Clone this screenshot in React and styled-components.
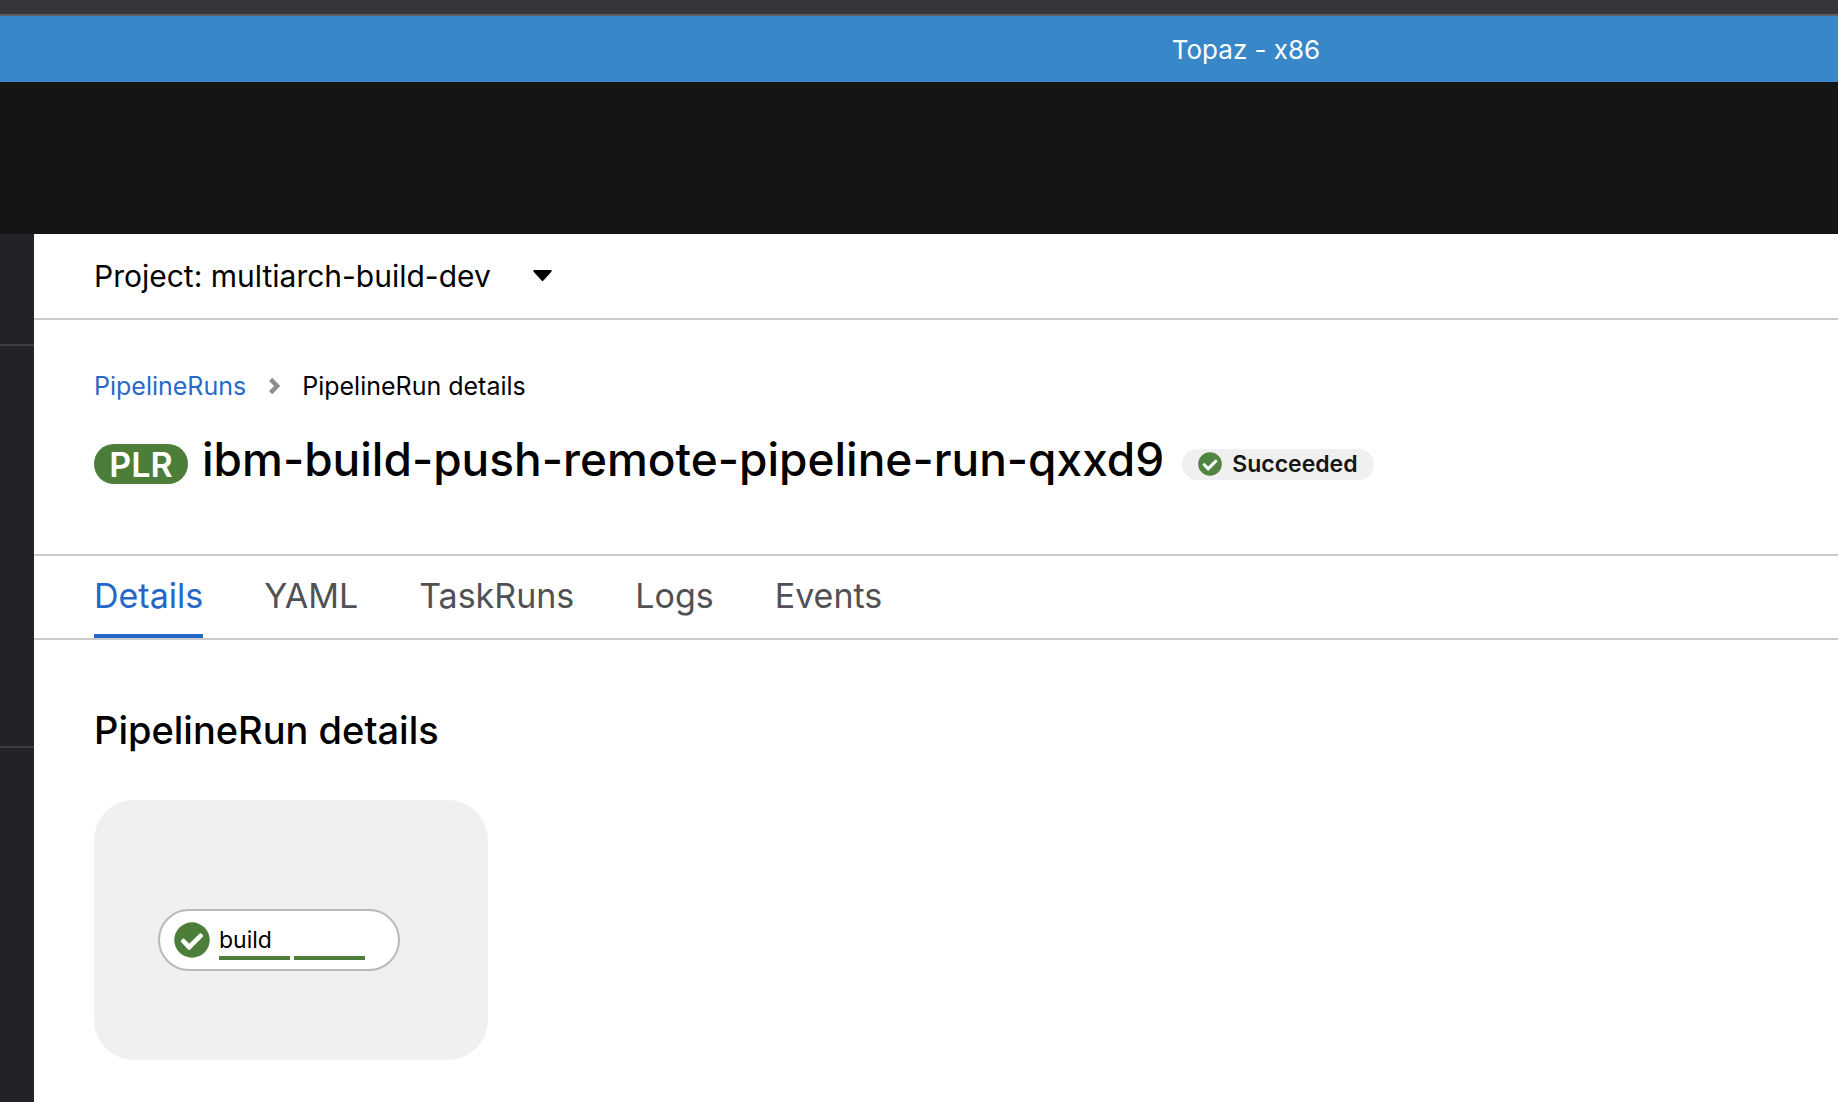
import React, { useState } from "react";
import styled, { createGlobalStyle } from "styled-components";

const GlobalStyle = createGlobalStyle`
  *, *::before, *::after { box-sizing: border-box; }
  body {
    margin: 0;
    background: #fff;
    color: #000;
    font-family: Inter, "Liberation Sans", sans-serif;
  }
  h1, h2, ol { margin: 0; padding: 0; }
  h1, h2 { font-weight: 500; }
  button, select { font-family: inherit; }
`;

const Page = styled.div`
  display: flex;
  flex-direction: column;
  min-height: 100vh;
`;

const WindowEdge = styled.div`
  height: 16px;
  background: #35363a;
  border-bottom: 2px solid #5c5e63;
`;

const Banner = styled.div`
  height: 66px;
  padding-left: 654px;
  display: flex;
  align-items: center;
  justify-content: center;
  background: #3887c9;
  color: #fff;
  font-size: 26px;
`;

const Masthead = styled.header`
  height: 152px;
  background: #151515;
`;

const Body = styled.div`
  display: flex;
  flex: 1;
`;

const Sidebar = styled.aside`
  flex: none;
  width: 34px;
  display: flex;
  flex-direction: column;
  background: #222328;
`;

const SidebarSection = styled.div`
  height: ${(p) => p.$height}px;
  border-bottom: 2px solid #3c3e43;
`;

const Main = styled.main`
  flex: 1;
  min-width: 0;
  background: #fff;
`;

const ProjectBar = styled.div`
  height: 86px;
  padding: 0 60px;
  display: flex;
  align-items: center;
  gap: 42px;
  border-bottom: 2px solid #cbcbcb;
`;

const ProjectSelect = styled.select`
  appearance: none;
  border: 0;
  padding: 0;
  background: transparent;
  color: #000;
  font-size: 30px;
  line-height: 40px;
`;

const PageHeader = styled.div`
  padding: 48px 60px 64px;
  border-bottom: 2px solid #cbcbcb;
`;

const Breadcrumb = styled.ol`
  display: flex;
  align-items: center;
  gap: 22px;
  margin-bottom: 24px;
  list-style: none;
  font-size: 25px;
  line-height: 36px;
`;

const Crumb = styled.li`
  display: flex;
  align-items: center;
  gap: 22px;
`;

const CrumbLink = styled.a`
  color: #2869ca;
  text-decoration: none;
`;

const TitleRow = styled.div`
  display: flex;
  align-items: center;
`;

const KindBadge = styled.span`
  display: flex;
  align-items: center;
  justify-content: center;
  width: 94px;
  height: 40px;
  margin: 10px 14px 0 0;
  border-radius: 20px;
  background: #4c7e39;
  color: #fff;
  font-size: 34px;
  font-weight: 600;
`;

const Title = styled.h1`
  font-size: 46px;
  line-height: 62px;
`;

const StatusBadge = styled.span`
  display: flex;
  align-items: center;
  gap: 10px;
  height: 31px;
  margin: 10px 0 0 18px;
  padding: 0 16px;
  border-radius: 16px;
  background: #f0f0f0;
  color: #151515;
  font-size: 23px;
  font-weight: 600;
`;

const TabBar = styled.div`
  display: flex;
  gap: 61px;
  padding: 0 60px;
  border-bottom: 2px solid #cbcbcb;
`;

const Tab = styled.button`
  height: 82px;
  padding: 0;
  border: 0;
  border-bottom: 4px solid ${(p) => (p.$active ? "#2467c8" : "transparent")};
  background: none;
  color: ${(p) => (p.$active ? "#2467c8" : "#505155")};
  font-size: 34px;
`;

const Section = styled.section`
  padding: 64px 60px 42px;
`;

const SectionTitle = styled.h2`
  margin-bottom: 44px;
  font-size: 38px;
  line-height: 52px;
`;

const Graph = styled.div`
  width: fit-content;
  padding: 109px 88px 89px 64px;
  border-radius: 40px;
  background: #f0f0f0;
`;

const TaskNode = styled.div`
  display: flex;
  align-items: center;
  gap: 9px;
  width: 242px;
  height: 62px;
  padding-left: 14px;
  border: 2px solid #b8b8bd;
  border-radius: 31px;
  background: #fff;
`;

const TaskInfo = styled.div`
  padding-top: 6px;
`;

const TaskName = styled.div`
  margin-bottom: 2px;
  font-size: 23px;
  line-height: 28px;
`;

const Steps = styled.div`
  display: flex;
  gap: 4px;
`;

const Step = styled.div`
  width: 71px;
  height: 4px;
  background: #4c7e39;
`;

const Icon = styled.svg`
  display: block;
  flex: none;
`;

function SuccessIcon({ size, color }) {
  return (
    <Icon width={size} height={size} viewBox="0 0 512 512" aria-hidden="true">
      <circle cx="256" cy="256" r="252" fill={color} />
      <path
        fill="#fff"
        d="M227 393l184-184a16 16 0 0 0 0-23l-23-22a16 16 0 0 0-22 0L216 308l-70-69a16 16 0 0 0-23 0l-22 23a16 16 0 0 0 0 22l104 109a16 16 0 0 0 22 0z"
      />
    </Icon>
  );
}

function CaretIcon() {
  return (
    <Icon width="19" height="12" viewBox="0 0 19 12" aria-hidden="true">
      <path d="M1.3 0h16.4c.9 0 1.3 1 .7 1.7l-8.2 9a1 1 0 0 1-1.4 0l-8.2-9C0 1 .4 0 1.3 0z" />
    </Icon>
  );
}

function ChevronIcon() {
  return (
    <Icon width="12" height="18" viewBox="0 0 12 18" aria-hidden="true">
      <path
        d="M2.6 2.4 9.2 9l-6.6 6.6"
        fill="none"
        stroke="#8a8d90"
        strokeWidth="4.4"
      />
    </Icon>
  );
}

const TABS = ["Details", "YAML", "TaskRuns", "Logs", "Events"];

export default function App() {
  const [active, setActive] = useState("Details");
  return (
    <Page>
      <GlobalStyle />
      <WindowEdge />
      <Banner>Topaz - x86</Banner>
      <Masthead />
      <Body>
        <Sidebar>
          <SidebarSection $height={112} />
          <SidebarSection $height={402} />
        </Sidebar>
        <Main>
          <ProjectBar>
            <ProjectSelect id="project" aria-label="Project" defaultValue="multiarch-build-dev">
              <option value="multiarch-build-dev">Project: multiarch-build-dev</option>
            </ProjectSelect>
            <CaretIcon />
          </ProjectBar>
          <PageHeader>
            <nav aria-label="Breadcrumb">
              <Breadcrumb>
                <Crumb>
                  <CrumbLink href="#pipelineruns">PipelineRuns</CrumbLink>
                  <ChevronIcon />
                </Crumb>
                <Crumb>PipelineRun details</Crumb>
              </Breadcrumb>
            </nav>
            <TitleRow>
              <KindBadge>PLR</KindBadge>
              <Title>ibm-build-push-remote-pipeline-run-qxxd9</Title>
              <StatusBadge>
                <SuccessIcon size={24} color="#4f8540" />
                Succeeded
              </StatusBadge>
            </TitleRow>
          </PageHeader>
          <TabBar role="tablist">
            {TABS.map((name) => (
              <Tab
                key={name}
                type="button"
                role="tab"
                aria-selected={name === active}
                $active={name === active}
                onClick={() => setActive(name)}
              >
                {name}
              </Tab>
            ))}
          </TabBar>
          <Section>
            <SectionTitle>PipelineRun details</SectionTitle>
            <Graph>
              <TaskNode>
                <SuccessIcon size={36} color="#4c7e39" />
                <TaskInfo>
                  <TaskName>build</TaskName>
                  <Steps>
                    <Step />
                    <Step />
                  </Steps>
                </TaskInfo>
              </TaskNode>
            </Graph>
          </Section>
        </Main>
      </Body>
    </Page>
  );
}
